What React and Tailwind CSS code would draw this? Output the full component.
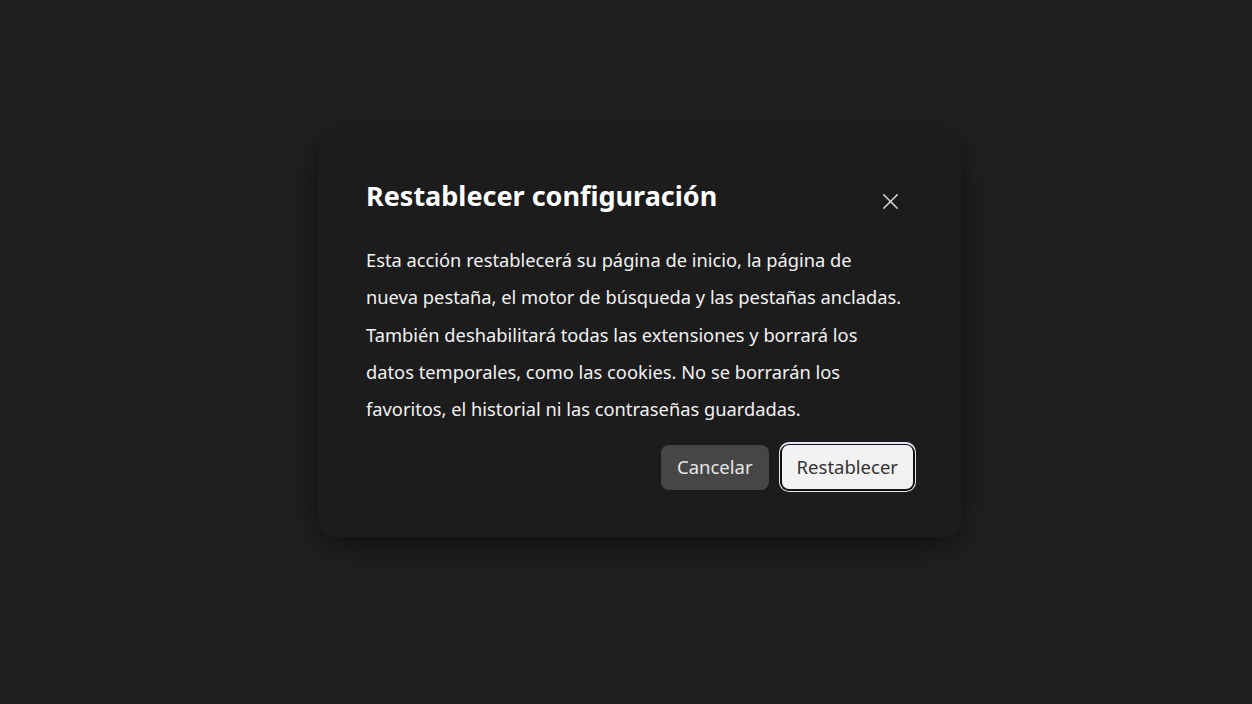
import { X } from "lucide-react"

export default function App() {
  return (
    <div
      className="w-full h-[704px] bg-[#202020] flex items-start justify-center pt-[132px] pl-[27px]"
      style={{ fontFamily: '"Noto Sans", "Open Sans", sans-serif' }}
    >
      <div className="w-[643px] h-[405px] bg-[#1c1c1c] rounded-[18px] shadow-[0_8px_32px_rgba(0,0,0,0.55)] pl-[48px] pr-[45px] pt-[44px] pb-[45px] flex flex-col">
        {/* Header */}
        <div className="flex items-start justify-between">
          <h2 className="text-[27px] leading-[40px] font-bold text-white">
            Restablecer configuración
          </h2>
          <button className="w-[36px] h-[36px] mt-[7px] mr-[8px] flex items-center justify-center text-[#e0e0e0]">
            <X size={27} strokeWidth={1.2} />
          </button>
        </div>

        {/* Body */}
        <p className="mt-[22px] text-[18.3px] leading-[37.3px] text-[#f2f2f2] font-[450]">
          Esta acción restablecerá su página de inicio, la página de
          <br />
          nueva pestaña, el motor de búsqueda y las pestañas ancladas.
          <br />
          También deshabilitará todas las extensiones y borrará los
          <br />
          datos temporales, como las cookies. No se borrarán los
          <br />
          favoritos, el historial ni las contraseñas guardadas.
        </p>

        {/* Actions */}
        <div className="mt-auto flex justify-end items-center gap-[10px]">
          <button className="h-[45px] px-[16px] rounded-[8px] bg-[#464646] text-[#e6e6e6] text-[18.5px]">
            Cancelar
          </button>
          <div className="rounded-[10px] p-[1.5px] bg-[#dfe6f2]">
            <div className="rounded-[9px] p-[1.5px] bg-[#111]">
              <button className="h-[44px] px-[15px] rounded-[7px] bg-[#f2f2f2] text-[#333] text-[18.5px]">
                Restablecer
              </button>
            </div>
          </div>
        </div>
      </div>
    </div>
  )
}
